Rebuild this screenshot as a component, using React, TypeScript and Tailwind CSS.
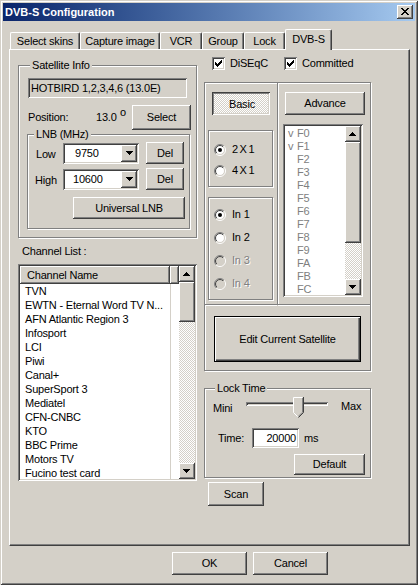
import React from "react";

const RAISED =
  "shadow-[inset_-1px_-1px_0_#404040,inset_1px_1px_0_#ffffff,inset_-2px_-2px_0_#808080,inset_2px_2px_0_#d4d0c8]";
const SUNKEN =
  "shadow-[inset_1px_1px_0_#808080,inset_-1px_-1px_0_#ffffff,inset_2px_2px_0_#404040,inset_-2px_-2px_0_#d4d0c8]";
const PRESSED =
  "shadow-[inset_1px_1px_0_#404040,inset_-1px_-1px_0_#ffffff,inset_2px_2px_0_#808080,inset_-2px_-2px_0_#d4d0c8]";
const ETCHED = "border border-[#808080] shadow-[inset_1px_1px_0_#ffffff,1px_1px_0_#ffffff]";
const CHECKER =
  "[background-image:repeating-conic-gradient(#d4d0c8_0%_25%,#ffffff_0%_50%)] [background-size:2px_2px]";

function pix(rows: string[], ox: number, oy: number) {
  let d = "";
  rows.forEach((row, r) => {
    let c = 0;
    while (c < row.length) {
      if (row[c] === "X") {
        const s = c;
        while (c < row.length && row[c] === "X") c++;
        d += `M${ox + s} ${oy + r}h${c - s}v1h-${c - s}z`;
      } else c++;
    }
  });
  return d;
}

const CHECK = ["......X", ".....XX", "X...XXX", "XX.XXX.", "XXXXX..", ".XXX...", "..X...."];
const CLOSE = ["XX....XX", ".XX..XX.", "..XXXX..", "...XX...", "..XXXX..", ".XX..XX.", "XX....XX"];
const UP = ["...X...", "..XXX..", ".XXXXX.", "XXXXXXX"];
const DOWN = ["XXXXXXX", ".XXXXX.", "..XXX..", "...X..."];

function Btn({ className = "", children }: { className?: string; children?: React.ReactNode }) {
  return (
    <div className={`flex items-center justify-center bg-[#d4d0c8] shrink-0 ${RAISED} ${className}`}>
      {children}
    </div>
  );
}

function CheckBox() {
  return (
    <div className={`w-[13px] h-[13px] bg-white shrink-0 ${SUNKEN}`}>
      <svg width="13" height="13" className="block" shapeRendering="crispEdges">
        <path d={pix(CHECK, 3, 3)} fill="#000" />
      </svg>
    </div>
  );
}

function Radio({ checked = false, disabled = false }: { checked?: boolean; disabled?: boolean }) {
  return (
    <svg width="12" height="12" className="block shrink-0">
      <defs>
        <linearGradient id="rOuter" x1="0" y1="0" x2="1" y2="1">
          <stop offset="0.5" stopColor="#808080" />
          <stop offset="0.5" stopColor="#ffffff" />
        </linearGradient>
        <linearGradient id="rInner" x1="0" y1="0" x2="1" y2="1">
          <stop offset="0.5" stopColor="#404040" />
          <stop offset="0.5" stopColor="#d4d0c8" />
        </linearGradient>
      </defs>
      <circle cx="6" cy="6" r="5.5" fill="none" stroke="url(#rOuter)" />
      <circle cx="6" cy="6" r="4.5" fill={disabled ? "#d4d0c8" : "#ffffff"} stroke="url(#rInner)" />
      {checked && <circle cx="6" cy="6" r="2" fill="#000" />}
    </svg>
  );
}

function ScrollBtn({ dir }: { dir: "up" | "down" }) {
  return (
    <div className={`w-[16px] h-[16px] shrink-0 bg-[#d4d0c8] ${RAISED}`}>
      <svg width="16" height="16" className="block" shapeRendering="crispEdges">
        <path d={pix(dir === "up" ? UP : DOWN, 4, 6)} fill="#000" />
      </svg>
    </div>
  );
}

function VScroll({ thumb }: { thumb: string }) {
  return (
    <div className="w-[16px] h-full flex flex-col shrink-0">
      <ScrollBtn dir="up" />
      <div className={`w-[16px] shrink-0 bg-[#d4d0c8] ${RAISED} ${thumb}`} />
      <div className={`flex-1 ${CHECKER}`} />
      <ScrollBtn dir="down" />
    </div>
  );
}

function Combo({ value, pad }: { value: string; pad: string }) {
  return (
    <div className={`w-[76px] h-[21px] bg-white p-[2px] flex shrink-0 ${SUNKEN}`}>
      <div className={`flex-1 flex items-center ${pad}`}>{value}</div>
      <div className={`w-[16px] h-full bg-[#d4d0c8] ${RAISED}`}>
        <svg width="16" height="17" className="block" shapeRendering="crispEdges">
          <path d={pix(DOWN, 5, 6)} fill="#000" />
        </svg>
      </div>
    </div>
  );
}

function Tab({ className, children }: { className: string; children: React.ReactNode }) {
  return (
    <div
      className={`h-[17px] mb-px flex items-center justify-center border-t border-l border-white border-r border-r-[#404040] rounded-tl-[2px] rounded-tr-[2px] shadow-[inset_-1px_0_0_#808080] ${className}`}
    >
      {children}
    </div>
  );
}

const CHANNELS = [
  "TVN",
  "EWTN - Eternal Word TV N...",
  "AFN Atlantic Region 3",
  "Infosport",
  "LCI",
  "Piwi",
  "Canal+",
  "SuperSport 3",
  "Mediatel",
  "CFN-CNBC",
  "KTO",
  "BBC Prime",
  "Motors TV",
  "Fucino test card",
];

const FREQS = [
  ["v", "F0"],
  ["v", "F1"],
  ["", "F2"],
  ["", "F3"],
  ["", "F4"],
  ["", "F5"],
  ["", "F6"],
  ["", "F7"],
  ["", "F8"],
  ["", "F9"],
  ["", "FA"],
  ["", "FB"],
  ["", "FC"],
];

function SliderThumb() {
  return (
    <svg width="11" height="21" className="block">
      <path d="M0.5 0.5 H9.5 V15 L5 19.5 L0.5 15 Z" fill="#d4d0c8" />
      <path d="M0.5 15.5 V0.5 H9.5" fill="none" stroke="#ffffff" />
      <path d="M0.5 15.5 L5 20" fill="none" stroke="#ffffff" />
      <path d="M9.5 1 V15.2 L5.2 19.5" fill="none" stroke="#808080" />
      <path d="M10.5 0 V15.5 L5.5 20.5" fill="none" stroke="#404040" />
    </svg>
  );
}

export default function App() {
  return (
    <div
      className={`w-[418px] h-[585px] bg-[#d4d0c8] p-[3px] flex flex-col text-[11px] leading-[13px] tracking-[-0.2px] text-black font-['Liberation_Sans',Arial,sans-serif] overflow-hidden select-none shadow-[inset_1px_1px_0_#d4d0c8,inset_-1px_-1px_0_#404040,inset_2px_2px_0_#ffffff,inset_-2px_-2px_0_#808080]`}
    >
      {/* Title bar */}
      <div className="h-[18px] shrink-0 flex items-center bg-linear-to-r from-[#0a246a] to-[#a6caf0] pl-[2px] pr-[2px]">
        <span className="font-bold text-white tracking-[0px]">DVB-S Configuration</span>
        <div className={`ml-auto w-[16px] h-[14px] bg-[#d4d0c8] ${RAISED}`}>
          <svg width="16" height="14" className="block" shapeRendering="crispEdges">
            <path d={pix(CLOSE, 4, 3)} fill="#000" />
          </svg>
        </div>
      </div>

      {/* Tabs + panel */}
      <div className="ml-[6px] flex flex-col">
        <div className="mt-[8px] h-[21px] flex items-end -mb-px relative z-10 pl-[1px]">
          <Tab className="w-[70px]">Select skins</Tab>
          <Tab className="w-[80px]">Capture image</Tab>
          <Tab className="w-[42px]">VCR</Tab>
          <Tab className="w-[42px]">Group</Tab>
          <Tab className="w-[41px]">Lock</Tab>
          <div className="w-[47px] h-[21px] bg-[#d4d0c8] flex items-center justify-center pb-[1px] border-t border-l border-white border-r border-r-[#404040] rounded-tl-[2px] rounded-tr-[2px] shadow-[inset_-1px_0_0_#808080]">
            DVB-S
          </div>
        </div>

        <div className="w-[401px] h-[497px] flex items-start border-l border-t border-white border-r border-b border-r-[#404040] border-b-[#404040] shadow-[inset_-1px_-1px_0_#808080]">
          {/* Left column */}
          <div className="ml-[8px] mt-[15px] w-[179px] flex flex-col">
            <div className={`relative h-[173px] ${ETCHED} pl-[9px] pt-[12px] flex flex-col`}>
              <span className="absolute left-[11px] -top-[7px] px-[2px] bg-[#d4d0c8]">Satellite Info</span>
              <div className={`w-[159px] h-[20px] ${SUNKEN} pl-[3px] flex items-center`}>
                HOTBIRD 1,2,3,4,6 (13.0E)
              </div>
              <div className="mt-[7px] flex items-center h-[25px]">
                <span className="w-[68px]">Position:</span>
                <span className="w-[22px]">13.0</span>
                <span className="w-[14px] pl-[2px] mb-[10px]">o</span>
                <Btn className="w-[59px] h-[25px]">Select</Btn>
              </div>
              <div className={`relative mt-[4px] -ml-px w-[163px] h-[95px] ${ETCHED} pl-[8px] pt-[7px] flex flex-col`}>
                <span className="absolute left-[6px] -top-[7px] px-[2px] bg-[#d4d0c8]">LNB (MHz)</span>
                <div className="flex items-center h-[22px]">
                  <span className="w-[27px] pt-[2px]">Low</span>
                  <Combo value="9750" pad="pl-[10px]" />
                  <Btn className="ml-[7px] w-[38px] h-[22px]">Del</Btn>
                </div>
                <div className="mt-[4px] flex items-center h-[22px]">
                  <span className="w-[28px] -ml-px pt-[2px]">High</span>
                  <Combo value="10600" pad="pl-[8px]" />
                  <Btn className="ml-[7px] w-[38px] h-[22px]">Del</Btn>
                </div>
                <Btn className="mt-[7px] ml-[37px] w-[112px] h-[22px]">Universal LNB</Btn>
              </div>
            </div>

            <div className="mt-[7px] pl-[4px]">Channel List :</div>

            <div className={`mt-[6px] w-[179px] h-[217px] bg-white ${SUNKEN} p-[2px] flex`}>
              <div className="flex-1 flex flex-col overflow-hidden">
                <div className="flex h-[18px] shrink-0">
                  <div className={`w-[150px] h-full bg-[#d4d0c8] ${RAISED} pl-[7px] flex items-center`}>
                    Channel Name
                  </div>
                  <div className={`flex-1 h-full bg-[#d4d0c8] ${RAISED}`} />
                </div>
                {CHANNELS.map((c) => (
                  <div key={c} className="flex h-[14px] shrink-0 leading-[14px]">
                    <div className="w-[151px] pl-[5px] border-r border-[#d4d0c8] whitespace-nowrap overflow-hidden">
                      {c}
                    </div>
                  </div>
                ))}
              </div>
              <VScroll thumb="h-[40px]" />
            </div>
          </div>

          {/* Right column */}
          <div className="ml-[7px] mt-[7px] w-[168px] flex flex-col">
            <div className="flex items-center h-[13px] pl-[8px]">
              <CheckBox />
              <span className="ml-[5px] w-[54px]">DiSEqC</span>
              <CheckBox />
              <span className="ml-[5px]">Committed</span>
            </div>

            <div className="mt-[12px] flex flex-col w-[167px]">
              <div className="flex h-[223px]">
                <div className="w-[73px] h-full border-l border-t border-b border-[#808080] shadow-[inset_1px_1px_0_#ffffff,0_1px_0_#ffffff] flex flex-col pl-[3px] pt-[9px]">
                  <div
                    className={`ml-[4px] w-[58px] h-[23px] shrink-0 flex items-center justify-center pt-[2px] pl-[2px] ${PRESSED} ${CHECKER}`}
                  >
                    Basic
                  </div>
                  <div className={`mt-[15px] w-[65px] h-[57px] ${ETCHED} pl-[5px] pt-[12px] flex flex-col gap-[8px]`}>
                    <div className="flex items-center h-[13px]">
                      <Radio checked />
                      <span className="ml-[6px] tracking-[1.5px]">2X1</span>
                    </div>
                    <div className="flex items-center h-[13px]">
                      <Radio />
                      <span className="ml-[6px] tracking-[1.5px]">4X1</span>
                    </div>
                  </div>
                  <div className={`mt-[10px] w-[65px] h-[103px] ${ETCHED} pl-[5px] pt-[10px] flex flex-col gap-[10px]`}>
                    <div className="flex items-center h-[13px]">
                      <Radio checked />
                      <span className="ml-[6px]">In 1</span>
                    </div>
                    <div className="flex items-center h-[13px]">
                      <Radio />
                      <span className="ml-[6px]">In 2</span>
                    </div>
                    <div className="flex items-center h-[13px]">
                      <Radio disabled />
                      <span className="ml-[6px] text-[#808080] [text-shadow:1px_1px_0_#ffffff]">In 3</span>
                    </div>
                    <div className="flex items-center h-[13px]">
                      <Radio disabled />
                      <span className="ml-[6px] text-[#808080] [text-shadow:1px_1px_0_#ffffff]">In 4</span>
                    </div>
                  </div>
                </div>

                <div className={`w-[94px] h-full ${ETCHED} pl-[5px] pt-[9px] flex flex-col`}>
                  <Btn className="ml-[2px] w-[80px] h-[23px]">Advance</Btn>
                  <div className={`mt-[9px] w-[80px] h-[173px] bg-white ${SUNKEN} p-[2px] flex`}>
                    <div className="flex-1 flex flex-col pt-[1px] overflow-hidden text-[#808080]">
                      {FREQS.map(([v, f]) => (
                        <div key={f} className="flex h-[13px] shrink-0 pl-[3px]">
                          <span className="w-[9px]">{v}</span>
                          <span>{f}</span>
                        </div>
                      ))}
                    </div>
                    <VScroll thumb="h-[101px]" />
                  </div>
                </div>
              </div>

              <div className="h-[66px] border-l border-r border-b border-[#808080] shadow-[inset_1px_0_0_#ffffff,1px_1px_0_#ffffff] pl-[9px] pt-[11px]">
                <div className="w-[147px] h-[46px] flex items-center justify-center bg-[#d4d0c8] border border-black shadow-[inset_1px_1px_0_#ffffff,inset_-1px_-1px_0_#404040,inset_-2px_-2px_0_#808080]">
                  Edit Current Satellite
                </div>
              </div>
            </div>

            {/* Lock Time */}
            <div className={`relative mt-[17px] w-[167px] h-[90px] ${ETCHED} pl-[8px] pt-[8px] flex flex-col`}>
              <span className="absolute left-[10px] -top-[7px] px-[2px] bg-[#d4d0c8]">Lock Time</span>
              <div className="flex items-start h-[21px]">
                <span className="w-[33px] mt-[5px]">Mini</span>
                <div className="relative w-[82px] h-[21px]">
                  <div className={`absolute left-0 right-0 top-[5px] h-[4px] ${SUNKEN}`} />
                  <div className="absolute left-[47px] top-0">
                    <SliderThumb />
                  </div>
                </div>
                <span className="ml-[13px] mt-[3px]">Max</span>
              </div>
              <div className="mt-[10px] flex items-center h-[20px]">
                <span className="ml-[5px] w-[34px]">Time:</span>
                <div className={`w-[47px] h-[20px] bg-white ${SUNKEN} flex items-center justify-end pr-[3px]`}>
                  20000
                </div>
                <span className="ml-[5px]">ms</span>
              </div>
              <Btn className="mt-[6px] ml-[81px] w-[71px] h-[21px]">Default</Btn>
            </div>

            <Btn className="mt-[4px] ml-[4px] w-[56px] h-[24px]">Scan</Btn>
          </div>
        </div>
      </div>

      {/* OK / Cancel */}
      <div className="mt-[6px] flex pl-[169px] gap-[6px]">
        <Btn className="w-[75px] h-[23px]">OK</Btn>
        <Btn className="w-[75px] h-[23px]">Cancel</Btn>
      </div>
    </div>
  );
}
